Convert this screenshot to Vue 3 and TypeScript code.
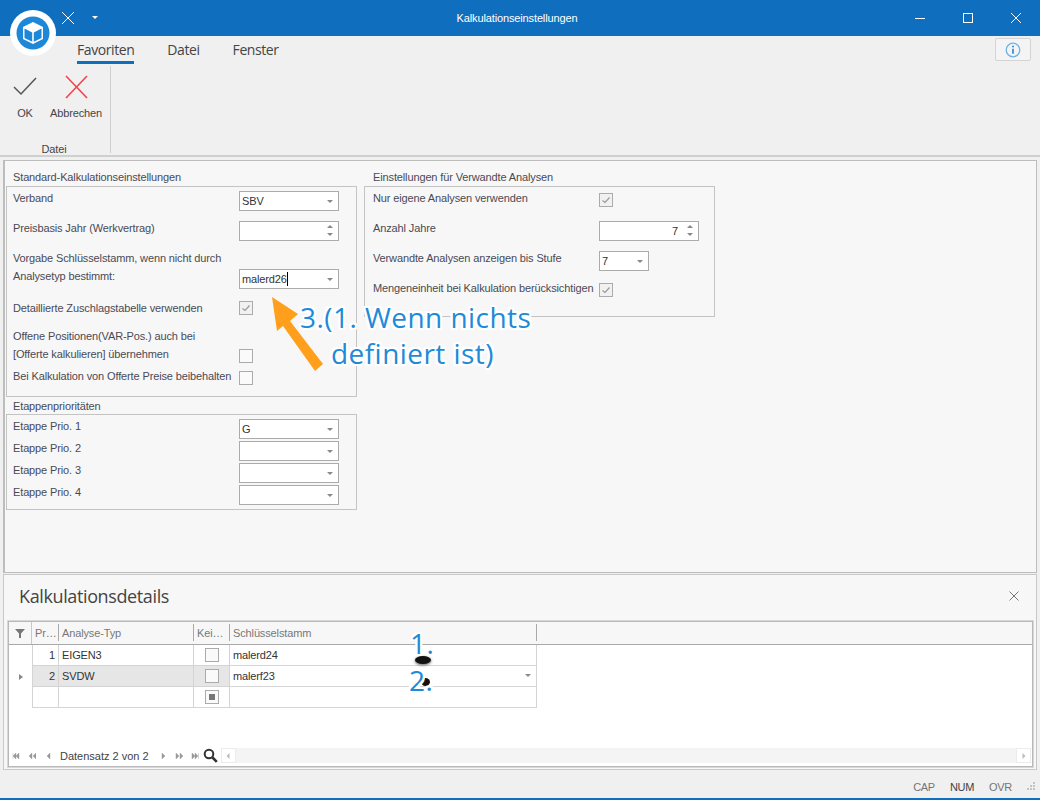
<script setup lang="ts">
const tabs = ['Favoriten', 'Datei', 'Fenster']
const prios = [
  { label: 'Etappe Prio. 1', value: 'G' },
  { label: 'Etappe Prio. 2', value: '' },
  { label: 'Etappe Prio. 3', value: '' },
  { label: 'Etappe Prio. 4', value: '' },
]
const rows = [
  { nr: '1', typ: 'EIGEN3', key: 'malerd24', current: false },
  { nr: '2', typ: 'SVDW', key: 'malerf23', current: true },
]
// 8x8 navigator glyphs
const navLeft = ['M1 1v6M7 1L4 4l3 3zM4 1L1 4l3 3z', 'M4 1L1 4l3 3zM8 1L5 4l3 3z', 'M6 1L3 4l3 3z']
const navRight = ['M3 1l3 3-3 3z', 'M1 1l3 3-3 3zM5 1l3 3-3 3z', 'M1 1l3 3-3 3zM4 1l3 3-3 3zM7.5 1v6']
</script>

<template>
  <div class="win">
    <header class="titlebar">
      <svg class="qat-x" width="16" height="16" viewBox="0 0 16 16"><path d="M2 2l12 12M14 2L2 14" stroke="#fff" stroke-width="1" fill="none" /></svg>
      <i class="qat-caret"></i>
      <span class="title">Kalkulationseinstellungen</span>
      <div class="winbtns">
        <svg width="12" height="12" viewBox="0 0 12 12"><path d="M1 6.5h10" stroke="#fff" fill="none" /></svg>
        <svg width="12" height="12" viewBox="0 0 12 12"><rect x="1.5" y="1.5" width="9" height="9" stroke="#fff" fill="none" /></svg>
        <svg width="12" height="12" viewBox="0 0 12 12"><path d="M1 1l10 10M11 1L1 11" stroke="#fff" fill="none" /></svg>
      </div>
    </header>

    <nav class="tabs">
      <a v-for="(t, i) in tabs" :key="t" :class="['tab', { active: i === 0 }]">{{ t }}</a>
      <button class="info">
        <svg width="16" height="16" viewBox="0 0 16 16">
          <circle cx="8" cy="8" r="6.8" stroke="#6db3e6" stroke-width="1.3" fill="none" />
          <path d="M8 6.8v5" stroke="#2b8ad6" stroke-width="1.7" />
          <circle cx="8" cy="4.6" r="1" fill="#2b8ad6" />
        </svg>
      </button>
    </nav>

    <section class="ribbon">
      <div class="rgroup">
        <div class="rbtns">
          <div class="rbtn ok">
            <svg width="24" height="24" viewBox="0 0 24 24"><path d="M1 12l7 7L23 3" stroke="#555" stroke-width="1.5" fill="none" /></svg>
            <span>OK</span>
          </div>
          <div class="rbtn cancel">
            <svg width="24" height="24" viewBox="0 0 24 24"><path d="M2 1l21 22M23 1L2 23" stroke="#f0454b" stroke-width="1.6" fill="none" /></svg>
            <span>Abbrechen</span>
          </div>
        </div>
        <div class="rlabel">Datei</div>
      </div>
    </section>

    <main class="settings">
      <div class="col">
        <h4 class="gtitle">Standard-Kalkulationseinstellungen</h4>
        <div class="gbox std">
          <div class="row h30"><label>Verband</label><div class="ctl combo">SBV<i class="caret"></i></div></div>
          <div class="row h48"><label>Preisbasis Jahr (Werkvertrag)</label><div class="ctl combo"><span class="spin"><i class="up"></i><i class="dn"></i></span></div></div>
          <div class="row h31 two">
            <label>Vorgabe Schlüsselstamm, wenn nicht durch<br />Analysetyp bestimmt:</label>
            <div class="ctl combo">malerd26<b class="cursor"></b><i class="caret"></i></div>
          </div>
          <div class="row h30"><label>Detaillierte Zuschlagstabelle verwenden</label><span class="chk on"><svg width="10" height="10" viewBox="0 0 10 10"><path d="M1.5 5.5l2.5 2 4.5-5" stroke="#999" stroke-width="1.2" fill="none" /></svg></span></div>
          <div class="row two off"><label>Offene Positionen(VAR-Pos.) auch bei<br />[Offerte kalkulieren] übernehmen</label><span class="chk"></span></div>
          <div class="row last"><label>Bei Kalkulation von Offerte Preise beibehalten</label><span class="chk"></span></div>
        </div>

        <h4 class="gtitle second">Etappenprioritäten</h4>
        <div class="gbox prio">
          <div v-for="p in prios" :key="p.label" class="row h22"><label>{{ p.label }}</label><div class="ctl combo">{{ p.value }}<i class="caret"></i></div></div>
        </div>
      </div>

      <div class="col">
        <h4 class="gtitle indented">Einstellungen für Verwandte Analysen</h4>
        <div class="gbox rel">
          <div class="row h30"><label>Nur eigene Analysen verwenden</label><span class="chk on"><svg width="10" height="10" viewBox="0 0 10 10"><path d="M1.5 5.5l2.5 2 4.5-5" stroke="#999" stroke-width="1.2" fill="none" /></svg></span></div>
          <div class="row h30"><label>Anzahl Jahre</label><div class="ctl num">7<span class="spin"><i class="up"></i><i class="dn"></i></span></div></div>
          <div class="row h30"><label>Verwandte Analysen anzeigen bis Stufe</label><div class="ctl short">7<i class="caret"></i></div></div>
          <div class="row"><label>Mengeneinheit bei Kalkulation berücksichtigen</label><span class="chk on"><svg width="10" height="10" viewBox="0 0 10 10"><path d="M1.5 5.5l2.5 2 4.5-5" stroke="#999" stroke-width="1.2" fill="none" /></svg></span></div>
        </div>
      </div>
    </main>

    <section class="details">
      <div class="dhead">
        <h2>Kalkulationsdetails</h2>
        <svg width="10" height="10" viewBox="0 0 10 10"><path d="M.5.5l9 9M9.5.5l-9 9" stroke="#777" fill="none" /></svg>
      </div>
      <div class="grid-wrap">
        <div class="grid-head">
          <div class="hc ind"><svg width="10" height="9" viewBox="0 0 10 9"><path d="M0 0h10L6 4.5V9H4V4.5z" fill="#777" /></svg></div>
          <div class="hc c-pr">Pr…</div>
          <div class="hc c-typ">Analyse-Typ</div>
          <div class="hc c-kei">Kei…</div>
          <div class="hc c-key">Schlüsselstamm</div>
          <div class="hfill"></div>
        </div>
        <div class="grid-body">
          <div v-for="r in rows" :key="r.nr" :class="['grow', { current: r.current }]">
            <div class="ind"><i v-if="r.current" class="marker"></i></div>
            <div class="cell c-pr right">{{ r.nr }}</div>
            <div class="cell c-typ">{{ r.typ }}</div>
            <div class="cell c-kei mid"><span class="chk"></span></div>
            <div class="cell c-key white">{{ r.key }}<i v-if="r.current" class="caret"></i></div>
          </div>
          <div class="grow">
            <div class="ind"></div>
            <div class="cell c-pr"></div>
            <div class="cell c-typ"></div>
            <div class="cell c-kei mid"><span class="chk mixed"><b></b></span></div>
            <div class="cell c-key"></div>
          </div>
        </div>
        <div class="navbar">
          <svg v-for="(d, i) in navLeft" :key="'l' + i" width="8" height="8" viewBox="0 0 8 8"><path :d="d" fill="#999" stroke="#999" stroke-width=".4" /></svg>
          <span class="pos">Datensatz 2 von 2</span>
          <svg v-for="(d, i) in navRight" :key="'r' + i" width="8" height="8" viewBox="0 0 8 8"><path :d="d" fill="#999" stroke="#999" stroke-width=".4" /></svg>
          <svg class="loupe" width="15" height="15" viewBox="0 0 15 15"><circle cx="6" cy="6" r="4.3" stroke="#333" stroke-width="2" fill="none" /><path d="M9.5 9.5l4.3 4.3" stroke="#333" stroke-width="2.6" /></svg>
          <div class="hscroll">
            <span class="sbtn"><svg width="8" height="8" viewBox="0 0 8 8"><path d="M5.5 1L2.5 4l3 3z" fill="#bbb" /></svg></span>
            <span class="sbtn"><svg width="8" height="8" viewBox="0 0 8 8"><path d="M2.5 1l3 3-3 3z" fill="#bbb" /></svg></span>
          </div>
        </div>
      </div>
    </section>

    <footer class="status">
      <span>CAP</span><span class="dark">NUM</span><span>OVR</span>
      <svg class="grip" width="12" height="12" viewBox="0 0 12 12"><path d="M9 1h2v2H9zM6 4h2v2H6zM9 4h2v2H9zM3 7h2v2H3zM6 7h2v2H6zM9 7h2v2H9z" fill="#c4c4c4" /></svg>
    </footer>

    <!-- things lying over the window -->
    <div class="logo">
      <svg width="34" height="34" viewBox="0 0 34 34">
        <circle cx="17" cy="17" r="16.5" fill="#1e88d8" />
        <path d="M17 6l10 5v12l-10 5-10-5V11z" fill="#fff" />
        <path d="M8.5 12.5l7.7 3.9v9.4l-7.7-3.9zM25.5 12.5l-7.7 3.9v9.4l7.7-3.9z" fill="#1e88d8" />
      </svg>
    </div>
    <svg class="arrow" width="60" height="80" viewBox="270 295 60 80">
      <path d="M272 297l26 17-8 7 33 43-8 7-32-45-6 5z" fill="#ff9f1c" />
    </svg>
    <i class="smudge s1"></i>
    <i class="smudge s2"></i>
    <div class="note note-main">3.(1. Wenn nichts<br /><span>definiert ist)</span></div>
    <div class="note note-1">1.</div>
    <div class="note note-2">2.</div>
  </div>
</template>

<style>
html, body { margin: 0; background: #f0f0f0; }
</style>

<style scoped>
.win {
  position: relative;
  width: 1040px;
  height: 800px;
  overflow: hidden;
  display: flex;
  flex-direction: column;
  background: #f0f0f0;
  border-bottom: 2px solid #106ebe;
  box-sizing: border-box;
  font: 11px/14px "Liberation Sans", Arial, sans-serif;
  letter-spacing: -.13px;
  color: #454545;
}
.titlebar {
  height: 36px;
  flex: none;
  background: #106ebe;
  display: flex;
  align-items: center;
  padding-left: 60px;
  position: relative;
  color: #fff;
}
.qat-x { margin-top: -1px; }
.qat-caret {
  margin-left: 16px;
  border: 3.5px solid transparent;
  border-top: 3.5px solid #fff;
  border-bottom: 0;
  margin-top: -1px;
}
.title { position: absolute; left: 0; width: 1034px; text-align: center; }
.winbtns { display: flex; gap: 36px; padding-right: 18px; margin-left: auto; }
.tabs {
  height: 30px;
  flex: none;
  display: flex;
  padding-left: 77px;
  gap: 33px;
  font: 14px/28px "Open Sans", sans-serif;
  letter-spacing: -.42px;
  color: #444;
  position: relative;
}
.tab { height: 26px; }
.tab.active { border-bottom: 3px solid #106ebe; height: 25px; }
.info {
  position: absolute;
  left: 995px;
  top: 2px;
  width: 36px;
  height: 23px;
  padding: 0;
  background: #f4f4f4;
  border: 1px solid #d4d4d4;
  border-radius: 2px;
  display: flex;
  align-items: center;
  justify-content: center;
}
.ribbon {
  height: 91px;
  flex: none;
  box-sizing: border-box;
  border-bottom: 2px solid #cfcfcf;
  display: flex;
}
.rgroup {
  width: 110px;
  height: 87px;
  border-right: 1px solid #cfcfcf;
  display: flex;
  flex-direction: column;
}
.rbtns { display: flex; flex: 1; padding-top: 9px; }
.rbtn { display: flex; flex-direction: column; align-items: center; gap: 8px; line-height: 12px; }
.rbtn svg { display: block; height: 24px; }
.ok { width: 50px; }
.cancel { width: 52px; }
.rlabel { text-align: center; line-height: 14px; margin-top: 2px; margin-bottom: -3px; padding-right: 2px; }
.settings {
  margin: 3px 3px 0;
  height: 413px;
  flex: none;
  box-sizing: border-box;
  border: 1px solid #bdbdbd;
  border-left-width: 2px;
  background: #f7f7f7;
  display: flex;
  gap: 7px;
  padding: 9px 0 0 1px;
  color: #4a4a55;
}
.col { width: 351px; flex: none; }
.gtitle { margin: 0; font-weight: normal; font-size: 11px; line-height: 14px; padding-left: 7px; height: 16px; }
.gtitle.second { margin-top: 1px; line-height: 16px; }
.gtitle.indented { padding-left: 9px; }
.gbox { border: 1px solid #c4c4c4; box-sizing: border-box; padding: 4px 0 0 6px; }
.std { height: 211px; }
.prio { height: 96px; }
.rel { height: 131px; padding-left: 8px; }
.rel .chk { margin-top: 2px; }
.row { display: flex; align-items: flex-start; }
.row label { width: 226px; flex: none; line-height: 14px; white-space: nowrap; }
.rel .row label { width: 226px; }
.h30 { height: 30px; }
.h48 { height: 48px; }
.h31 { height: 32px; }
.h22 { height: 22px; }
.std .two label { line-height: 18px; margin-top: -20px; }
.std .off { margin-top: 18px; height: 22px; }
.std .off label { margin-top: -22px; }
.last { height: 20px; }
.last label { margin-top: -2px; }
.ctl {
  position: relative;
  width: 100px;
  height: 20px;
  box-sizing: border-box;
  border: 1px solid #ababab;
  background: #fff;
  line-height: 18px;
  padding-left: 2px;
  color: #333;
}
.short { width: 50px; }
.num { text-align: right; padding-right: 20px; }
.caret {
  position: absolute;
  right: 5px;
  top: 8px;
  border: 3px solid transparent;
  border-top: 3px solid #888;
  border-bottom: 0;
}
.spin { position: absolute; right: 5px; top: 3px; display: flex; flex-direction: column; gap: 5px; }
.spin i { display: block; border: 3px solid transparent; }
.spin .up { border-bottom: 3px solid #888; border-top: 0; }
.spin .dn { border-top: 3px solid #888; border-bottom: 0; }
.cursor { display: inline-block; width: 1px; height: 14px; background: #000; vertical-align: -3px; }
.chk {
  display: inline-flex;
  align-items: center;
  justify-content: center;
  width: 14px;
  height: 14px;
  box-sizing: border-box;
  border: 1px solid #ababab;
  background: #fafafa;
}
.chk.on { background: #f1f1f1; }
.mixed b { width: 6px; height: 6px; background: #777; display: block; }
.details {
  margin: 1px 3px 0;
  height: 196px;
  flex: none;
  box-sizing: border-box;
  border: 1px solid #c8c8c8;
  padding: 0 3px 2px 4px;
  background: #f7f7f7;
  display: flex;
  flex-direction: column;
}
.dhead {
  height: 46px;
  flex: none;
  box-sizing: border-box;
  display: flex;
  align-items: center;
  justify-content: space-between;
  padding: 0 14px 4px 11px;
}
.dhead h2 { margin: 0; font: 18px/24px "Open Sans", sans-serif; color: #444; letter-spacing: -.38px; }
.grid-wrap {
  flex: 1;
  display: flex;
  flex-direction: column;
  border: 1px solid #b8b8b8;
  background: #fff;
  outline: 1px solid #d8d8d8;
  min-height: 0;
}
.grid-head { height: 22px; display: flex; background: #f7f7f7; border-bottom: 1px solid #a9a9a9; color: #777; flex: none; }
.hc { position: relative; line-height: 22px; padding-left: 3px; box-sizing: border-box; }
.hc::after { content: ""; position: absolute; right: 0; top: 2px; bottom: 3px; width: 1px; background: #a9a9a9; }
.ind { width: 23px; flex: none; box-sizing: border-box; display: flex; align-items: center; justify-content: center; }
.hc.ind { padding-left: 0; border-right: 1px solid #c8c8c8; }
.hc.ind::after { display: none; }
.c-pr { width: 27px; flex: none; }
.c-typ { width: 135px; flex: none; }
.c-kei { width: 36px; flex: none; }
.c-key { width: 307px; flex: none; }
.hfill { flex: 1; }
.grow { display: flex; height: 21px; }
.cell { box-sizing: border-box; border-right: 1px solid #d4d4d4; border-bottom: 1px solid #d4d4d4; line-height: 20px; padding-left: 3px; color: #333; position: relative; }
.c-pr.cell { border-left: 1px solid #d4d4d4; }
.grow.current .cell { background: #e6e6e6; }
.grow.current .white { background: #fff; }
.right { text-align: right; padding-right: 3px; }
.mid { display: flex; align-items: center; justify-content: center; padding: 0; }
.marker { border: 3.5px solid transparent; border-left: 4px solid #888; border-right: 0; }
.grid-body { flex: 1; min-height: 0; }
.navbar { height: 21px; flex: none; display: flex; align-items: center; padding: 0 1px 0 3px; gap: 8px; color: #444; }
.navbar > svg { flex: none; }
.pos { margin-right: 2px; white-space: nowrap; letter-spacing: 0; }
.loupe { margin-left: -4px; }
.hscroll { flex: 1; margin-left: -5px; height: 15px; background: #f4f4f4; display: flex; justify-content: space-between; }
.sbtn { width: 15px; height: 15px; box-sizing: border-box; background: #fff; border: 1px solid #ececec; display: flex; align-items: center; justify-content: center; }
.status {
  flex: 1;
  display: flex;
  justify-content: flex-end;
  align-items: center;
  gap: 15px;
  padding: 6px 4px 0 0;
  color: #757575;
  letter-spacing: -.3px;
}
.status .dark { color: #444; }
.grip { margin-left: -3px; }
.logo {
  position: absolute;
  left: 10px;
  top: 10px;
  width: 46px;
  height: 46px;
  border-radius: 50%;
  background: #fff;
  display: flex;
  align-items: center;
  justify-content: center;
}
.arrow { position: absolute; left: 270px; top: 295px; }
.note {
  position: absolute;
  font: 28px/36px "Open Sans", sans-serif;
  color: #1f8ad8;
  letter-spacing: .45px;
  white-space: nowrap;
  text-shadow: 2px 0 #fff, -2px 0 #fff, 0 2px #fff, 0 -2px #fff, 2px 2px #fff, -2px 2px #fff, 2px -2px #fff, -2px -2px #fff;
}
.note-main { left: 300px; top: 299px; }
.note-main span { margin-left: 31px; }
.note-1 { left: 410px; top: 625px; }
.note-2 { left: 409px; top: 662px; }
.smudge { position: absolute; background: #111; border-radius: 50%; }
.s1 { left: 415px; top: 656px; width: 16px; height: 8px; box-shadow: 0 1px 3px #555; }
.s2 { left: 421px; top: 678px; width: 9px; height: 8px; }
</style>
